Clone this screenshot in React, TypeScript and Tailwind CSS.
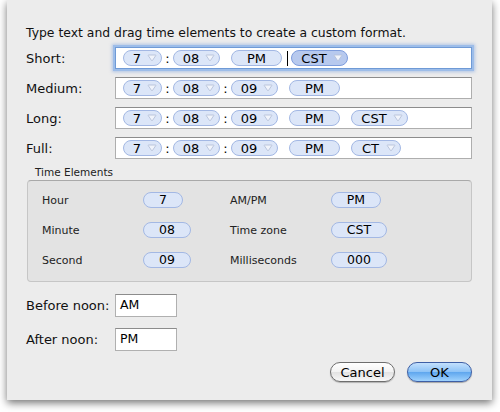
import React from "react";

const font = { fontFamily: '"DejaVu Sans", "Liberation Sans", sans-serif' };

function Chevron() {
  return (
    <svg width="10" height="8" viewBox="0 0 10 8" className="shrink-0">
      <path d="M1.2 1.5 Q1 1 1.6 1 L8.4 1 Q9 1 8.8 1.5 L5.4 6.6 Q5 7.2 4.6 6.6 Z" fill="#f1f4fb" stroke="#b6c1d8" strokeWidth="0.9" strokeLinejoin="round" />
    </svg>
  );
}

function Token({
  text,
  w,
  chevron = false,
  selected = false,
}: {
  text: string;
  w: string;
  chevron?: boolean;
  selected?: boolean;
}) {
  const base = selected
    ? "bg-[#b7c9ee] border-[#7e9ddd]"
    : "bg-[#dce6f8] border-[#a3b8e4]";
  return (
    <div
      className={`${w} ${base} h-[16px] rounded-full border flex items-center shrink-0 ${chevron ? "pl-[3px] pr-[4px]" : "px-[3px]"}`}
    >
      <span className="flex-1 text-center text-[13px] leading-none text-black">{text}</span>
      {chevron && <Chevron />}
    </div>
  );
}

function Colon() {
  return <span className="w-[11px] text-center text-[13px] leading-none shrink-0">:</span>;
}

function Space() {
  return <span className="w-[11px] shrink-0" />;
}

function Field({ children, focus = false }: { children: React.ReactNode; focus?: boolean }) {
  return (
    <div
      className={`flex-1 h-[22px] bg-white flex items-center pl-[7px] border ${
        focus
          ? "border-[#6f9ad6] shadow-[0_0_0_2px_#9dbde9,0_0_3px_3px_rgba(120,160,225,0.5)]"
          : "border-[#aeaeae] border-t-[#8c8c8c]"
      }`}
    >
      {children}
    </div>
  );
}

function Row({ label, children, focus = false }: { label: string; children: React.ReactNode; focus?: boolean }) {
  return (
    <div className="flex items-center h-[22px]">
      <div className="w-[89px] text-[13px] leading-none text-[#111]">{label}</div>
      <Field focus={focus}>{children}</Field>
    </div>
  );
}

function ElemToken({ text, w }: { text: string; w: string }) {
  return (
    <div className={`${w} h-[16px] rounded-full border bg-[#dce6f8] border-[#a3b8e4] flex items-center justify-center text-[12.5px] leading-none text-black`}>
      {text}
    </div>
  );
}

export default function App() {
  return (
    <div className="w-[500px] h-[412px] bg-white overflow-hidden" style={font}>
      <div className="ml-[7px] w-[485px] h-[400px] bg-[#ececec] shadow-[0_3px_8px_rgba(0,0,0,0.55)] flex flex-col pl-[19px] pr-[20px]">
        <div className="mt-[25px] h-[16px] flex items-center text-[12.4px] text-[#111] leading-none">
          Type text and drag time elements to create a custom format.
        </div>
        <div className="mt-[6px] flex flex-col gap-[8px]">
          <Row label="Short:" focus>
            <Token text="7" w="w-[39px]" chevron />
            <Colon />
            <Token text="08" w="w-[47px]" chevron />
            <Space />
            <Token text="PM" w="w-[51px]" />
            <span className="ml-[5px] mr-[3px] w-px h-[15px] bg-black" />
            <Token text="CST" w="w-[57px]" chevron selected />
          </Row>
          <Row label="Medium:">
            <Token text="7" w="w-[39px]" chevron />
            <Colon />
            <Token text="08" w="w-[47px]" chevron />
            <Colon />
            <Token text="09" w="w-[47px]" chevron />
            <Space />
            <Token text="PM" w="w-[51px]" />
          </Row>
          <Row label="Long:">
            <Token text="7" w="w-[39px]" chevron />
            <Colon />
            <Token text="08" w="w-[47px]" chevron />
            <Colon />
            <Token text="09" w="w-[47px]" chevron />
            <Space />
            <Token text="PM" w="w-[51px]" />
            <Space />
            <Token text="CST" w="w-[57px]" chevron />
          </Row>
          <Row label="Full:">
            <Token text="7" w="w-[39px]" chevron />
            <Colon />
            <Token text="08" w="w-[47px]" chevron />
            <Colon />
            <Token text="09" w="w-[47px]" chevron />
            <Space />
            <Token text="PM" w="w-[51px]" />
            <Space />
            <Token text="CT" w="w-[50px]" chevron />
          </Row>
        </div>

        <div className="mt-[6px] ml-[9px] h-[14px] flex items-center text-[10.5px] leading-none text-[#222]">
          Time Elements
        </div>
        <div className="mt-[1px] ml-[1px] w-[445px] h-[102px] rounded-[4px] bg-[#e3e3e3] border border-[#c6c6c6] border-t-[#a9a9a9] pl-[14px] pt-[11px]">
          <div className="grid grid-cols-[101px_87px_101px_auto] gap-y-[14px] items-center text-[11px] text-[#222] leading-none">
            <div>Hour</div>
            <ElemToken text="7" w="w-[40px]" />
            <div>AM/PM</div>
            <ElemToken text="PM" w="w-[50px]" />
            <div>Minute</div>
            <ElemToken text="08" w="w-[48px]" />
            <div>Time zone</div>
            <ElemToken text="CST" w="w-[56px]" />
            <div>Second</div>
            <ElemToken text="09" w="w-[48px]" />
            <div>Milliseconds</div>
            <ElemToken text="000" w="w-[56px]" />
          </div>
        </div>

        <div className="mt-[12px] flex items-center">
          <div className="w-[89px] text-[13px] leading-none text-[#111]">Before noon:</div>
          <div className="w-[62px] h-[23px] bg-white border border-[#b0b0b0] border-t-[#8c8c8c] flex items-center pl-[4px] text-[12.5px] leading-none">
            AM
          </div>
        </div>
        <div className="mt-[11px] flex items-center">
          <div className="w-[89px] text-[13px] leading-none text-[#111]">After noon:</div>
          <div className="w-[62px] h-[23px] bg-white border border-[#b0b0b0] border-t-[#8c8c8c] flex items-center pl-[4px] text-[12.5px] leading-none">
            PM
          </div>
        </div>

        <div className="mt-[11px] flex justify-end gap-[12px]">
          <button className="w-[65px] h-[20px] rounded-full border border-[#6e6e6e] bg-[linear-gradient(#ffffff,#f2f2f2_50%,#e2e2e2_51%,#f8f8f8)] text-[13px] leading-none text-black shadow-[0_1px_1px_rgba(0,0,0,0.25)]">
            Cancel
          </button>
          <button className="w-[65px] h-[20px] rounded-full border border-[#3e5fa5] bg-[linear-gradient(#c3e0fd,#8cc2f6_50%,#5ea6ee_51%,#9fd2fd)] text-[13px] leading-none text-black shadow-[0_1px_1px_rgba(0,0,0,0.3)]">
            OK
          </button>
        </div>
      </div>
    </div>
  );
}
